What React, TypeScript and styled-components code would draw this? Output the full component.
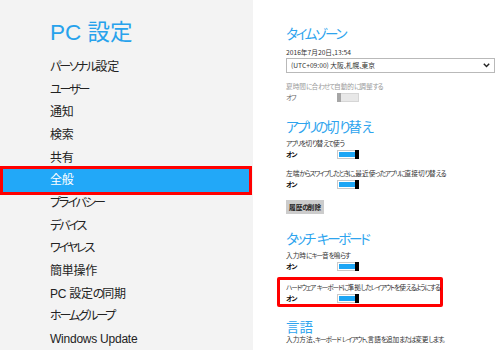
import React from "react";
import styled, { createGlobalStyle, css } from "styled-components";

const Global = createGlobalStyle`
  html, body { margin: 0; padding: 0; background: #fff; }
  body {
    font-family: "Noto Sans CJK JP", "Noto Sans", sans-serif;
    font-feature-settings: "palt";
  }
`;

const Kana = styled.span`
  letter-spacing: -0.17em;
`;

const KANA = /([\u3001-\u303f\u3040-\u30ff\uff01-\uff60]+)/;

const JP = ({ children }: { children: string }) => (
  <>
    {children
      .split(KANA)
      .map((part, i) => (KANA.test(part) ? <Kana key={i}>{part}</Kana> : <React.Fragment key={i}>{part}</React.Fragment>))}
  </>
);

const Screen = styled.div`
  width: 500px;
  height: 350px;
  display: flex;
  overflow: hidden;
  background: #fff;
`;

const Sidebar = styled.nav`
  width: 253px;
  flex: none;
  background: #f3f3f3;
  display: flex;
  flex-direction: column;
  padding-top: 18px;
  box-sizing: border-box;
  font-family: "Liberation Sans", "Noto Sans CJK JP", sans-serif;
`;

const Title = styled.h1`
  margin: 0 0 8px 50px;
  font-weight: 400;
  font-size: 22.5px;
  line-height: 30px;
  color: #27a2ec;
`;

const MenuItem = styled.div<{ $active?: boolean }>`
  height: 22.67px;
  line-height: 22.67px;
  padding-left: 50px;
  font-size: 12px;
  letter-spacing: -0.02em;
  color: #222;
  white-space: nowrap;
  ${(p) =>
    p.$active &&
    css`
      position: relative;
      z-index: 1;
      margin: 0 4px 0 3px;
      padding-left: 47px;
      background: #22a8f8;
      color: #fff;
      outline: 3px solid #f00;
    `}
`;

const Content = styled.main`
  flex: 1;
  padding: 26px 0 0 33px;
  display: flex;
  flex-direction: column;
  align-items: flex-start;
  box-sizing: border-box;
`;

const Heading = styled.h2<{ $mt?: number }>`
  margin: ${(p) => p.$mt ?? 0}px 0 0;
  font-weight: 400;
  font-size: 13.5px;
  line-height: 14px;
  color: #2ea4ee;
  white-space: nowrap;
`;

const Label = styled.div<{ $mt?: number; $muted?: boolean }>`
  margin-top: ${(p) => p.$mt ?? 0}px;
  font-size: 6.7px;
  line-height: 11px;
  color: ${(p) => (p.$muted ? "#9a9a9a" : "#333")};
  white-space: nowrap;
`;

const Select = styled.div<{ $mt?: number }>`
  margin-top: ${(p) => p.$mt ?? 0}px;
  width: 209px;
  height: 15px;
  box-sizing: border-box;
  border: 1px solid #b9b9b9;
  display: flex;
  align-items: center;
  justify-content: space-between;
  padding: 0 4px 0 4px;
  font-size: 6.7px;
  color: #333;
`;

const Row = styled.div<{ $mt?: number }>`
  margin-top: ${(p) => p.$mt ?? 0}px;
  height: 11px;
  display: flex;
  align-items: center;
`;

const State = styled.span<{ $on?: boolean }>`
  width: 51px;
  font-size: 6.7px;
  line-height: 11px;
  font-weight: ${(p) => (p.$on ? 700 : 400)};
  color: ${(p) => (p.$on ? "#111" : "#666")};
`;

const Track = styled.div<{ $on?: boolean }>`
  width: 22px;
  height: 9px;
  box-sizing: border-box;
  display: flex;
  flex-direction: ${(p) => (p.$on ? "row" : "row-reverse")};
  border: 1px solid ${(p) => (p.$on ? "#c9c9c9" : "#d6d6d6")};
  border-right-width: ${(p) => (p.$on ? 0 : 1)}px;
  border-left-width: ${(p) => (p.$on ? 1 : 0)}px;
  background: ${(p) => (p.$on ? "#fff" : "#e8e8e8")};
`;

const Fill = styled.div<{ $on?: boolean }>`
  flex: 1;
  margin: ${(p) => (p.$on ? "1px 0 1px 1px" : "0")};
  background: ${(p) => (p.$on ? "#1ea6f5" : "#e8e8e8")};
`;

const Thumb = styled.div<{ $on?: boolean }>`
  width: 4px;
  margin: -1px 0;
  background: ${(p) => (p.$on ? "#000" : "#a6a6a6")};
`;

const Button = styled.div<{ $mt?: number }>`
  margin-top: ${(p) => p.$mt ?? 0}px;
  height: 14px;
  padding: 0 3px;
  display: flex;
  align-items: center;
  background: #cccccc;
  font-size: 6.7px;
  font-weight: 700;
  color: #222;
`;

const Highlight = styled.div<{ $mt?: number }>`
  margin: ${(p) => p.$mt ?? 0}px 0 0 -9px;
  width: 166px;
  box-sizing: border-box;
  border: 3px solid #f00;
  border-radius: 2px;
  padding: 1.5px 0 0.5px 6px;
`;

const Toggle = ({ on }: { on: boolean }) => (
  <Track $on={on}>
    <Fill $on={on} />
    <Thumb $on={on} />
  </Track>
);

const Chevron = () => (
  <svg width="7" height="5" viewBox="0 0 7 5">
    <path d="M0.8 0.8 L3.5 3.6 L6.2 0.8" fill="none" stroke="#222" strokeWidth="1.4" />
  </svg>
);

const menu = [
  "パーソナル設定",
  "ユーザー",
  "通知",
  "検索",
  "共有",
  "全般",
  "プライバシー",
  "デバイス",
  "ワイヤレス",
  "簡単操作",
  "PC 設定の同期",
  "ホームグループ",
  "Windows Update",
];

export default function App() {
  return (
    <>
      <Global />
      <Screen>
        <Sidebar>
          <Title>PC 設定</Title>
          {menu.map((m) => (
            <MenuItem key={m} $active={m === "全般"}>
              <JP>{m}</JP>
            </MenuItem>
          ))}
        </Sidebar>
        <Content>
          <Heading><JP>タイムゾーン</JP></Heading>
          <Label $mt={6.7}><JP>2016年7月20日、13:54</JP></Label>
          <Select $mt={0.3}>
            <span><JP>(UTC+09:00) 大阪、札幌、東京</JP></span>
            <Chevron />
          </Select>
          <Label $mt={8.5} $muted>
            <JP>夏時間に合わせて自動的に調整する</JP>
          </Label>
          <Row>
            <State><JP>オフ</JP></State>
            <Toggle on={false} />
          </Row>

          <Heading $mt={15.7}><JP>アプリの切り替え</JP></Heading>
          <Label $mt={4.8}><JP>アプリを切り替えて使う</JP></Label>
          <Row>
            <State $on><JP>オン</JP></State>
            <Toggle on />
          </Row>
          <Label $mt={8.5}><JP>左端からスワイプしたときに、最近使ったアプリに直接切り替える</JP></Label>
          <Row>
            <State $on><JP>オン</JP></State>
            <Toggle on />
          </Row>
          <Button $mt={10}><JP>履歴の削除</JP></Button>

          <Heading $mt={16.7}><JP>タッチ キーボード</JP></Heading>
          <Label $mt={4.8}><JP>入力時にキー音を鳴らす</JP></Label>
          <Row $mt={0.5}>
            <State $on><JP>オン</JP></State>
            <Toggle on />
          </Row>
          <Highlight $mt={4.7}>
            <Label><JP>ハードウェア キーボードに準拠したレイアウトを使えるようにする</JP></Label>
            <Row>
              <State $on><JP>オン</JP></State>
              <Toggle on />
            </Row>
          </Highlight>

          <Heading $mt={11.5}><JP>言語</JP></Heading>
          <Label $mt={1.5}><JP>入力方法、キーボード レイアウト、言語を追加または変更します。</JP></Label>
        </Content>
      </Screen>
    </>
  );
}
